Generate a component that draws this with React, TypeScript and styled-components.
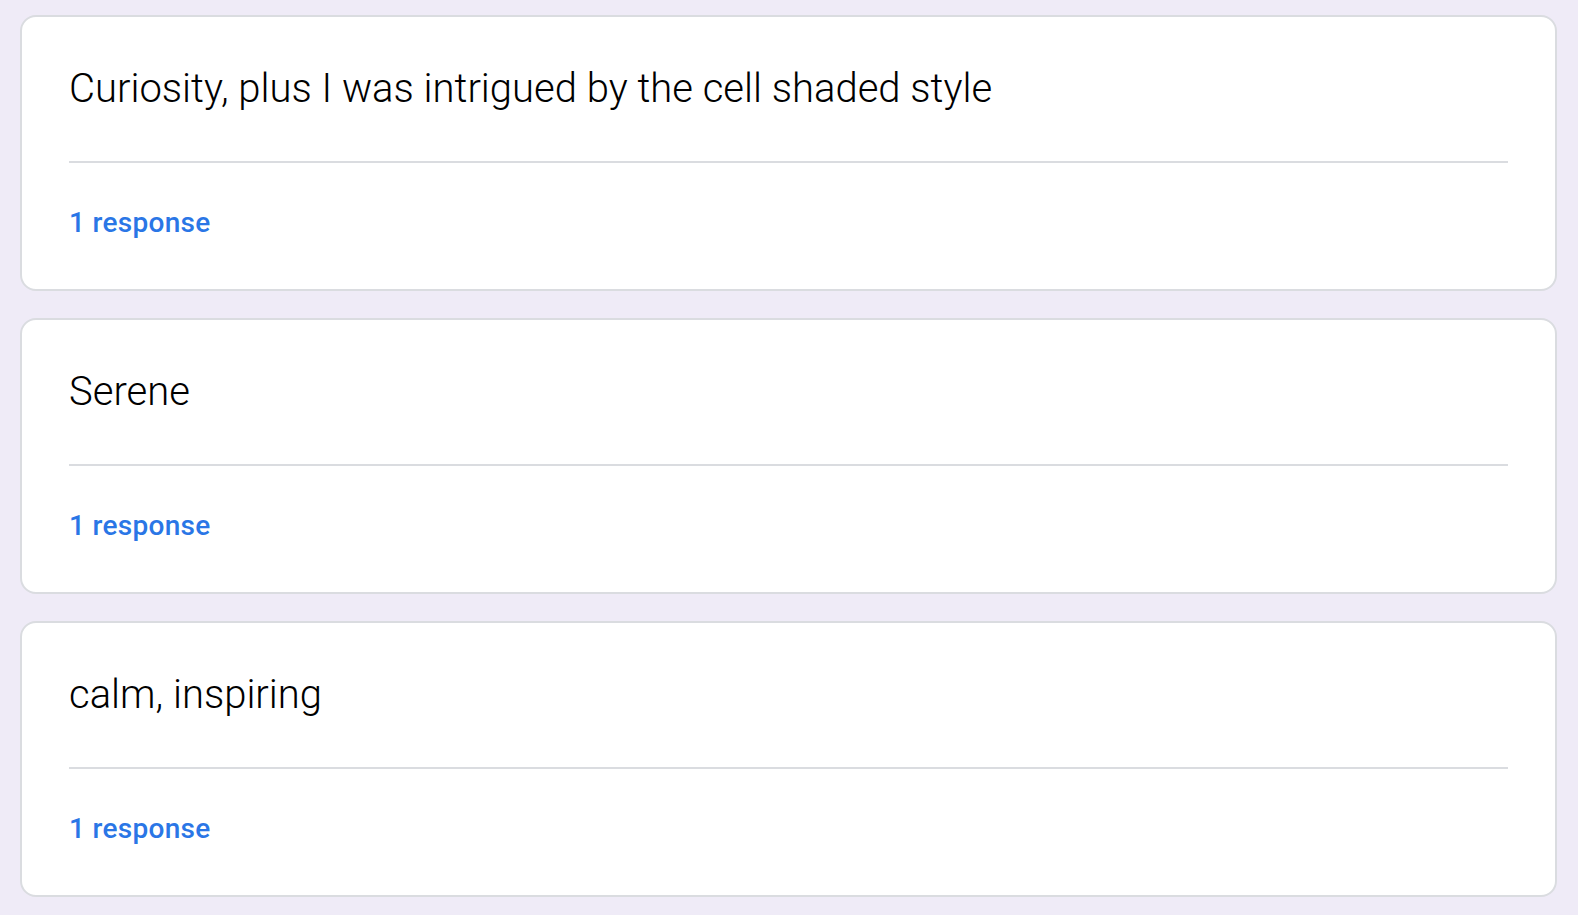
import React, { FC } from "react"
import styled, { createGlobalStyle } from "styled-components"

const answers = [
  "Curiosity, plus I was intrigued by the cell shaded style",
  "Serene",
  "calm, inspiring",
]

const GlobalStyle = createGlobalStyle`
  body {
    margin: 0;
    background: #efebf7;
    font-family: Roboto, "Liberation Sans", sans-serif;
  }
`

interface CardProps {
  text: string
  count: number
}

const AnswerCard: FC<CardProps> = ({ text, count }) => (
  <Card>
    <AnswerText>{text}</AnswerText>
    <Divider />
    <ResponseCount>
      {count} {count === 1 ? "response" : "responses"}
    </ResponseCount>
  </Card>
)

const App: FC = () => (
  <>
    <GlobalStyle />
    <Page>
      {answers.map(answer => (
        <AnswerCard key={answer} text={answer} count={1} />
      ))}
    </Page>
  </>
)

const Page = styled.div`
  display: flex;
  flex-direction: column;
  gap: 27px;
  padding: 15px 21px 20px 20px;
`

const Card = styled.div`
  display: flex;
  flex-direction: column;
  background: #fff;
  border: 2px solid #dadce0;
  border-radius: 16px;
  padding: 48px 47px 48px;
`

const AnswerText = styled.div`
  font-size: 40px;
  line-height: 48px;
  font-weight: 300;
  color: #000;
`

const Divider = styled.div`
  height: 2px;
  background: #dadce0;
  margin-top: 48px;
`

const ResponseCount = styled.div`
  margin-top: 42px;
  font-size: 28px;
  line-height: 36px;
  font-weight: 500;
  color: #2a76e6;
  letter-spacing: 0.3px;
`

export default App
